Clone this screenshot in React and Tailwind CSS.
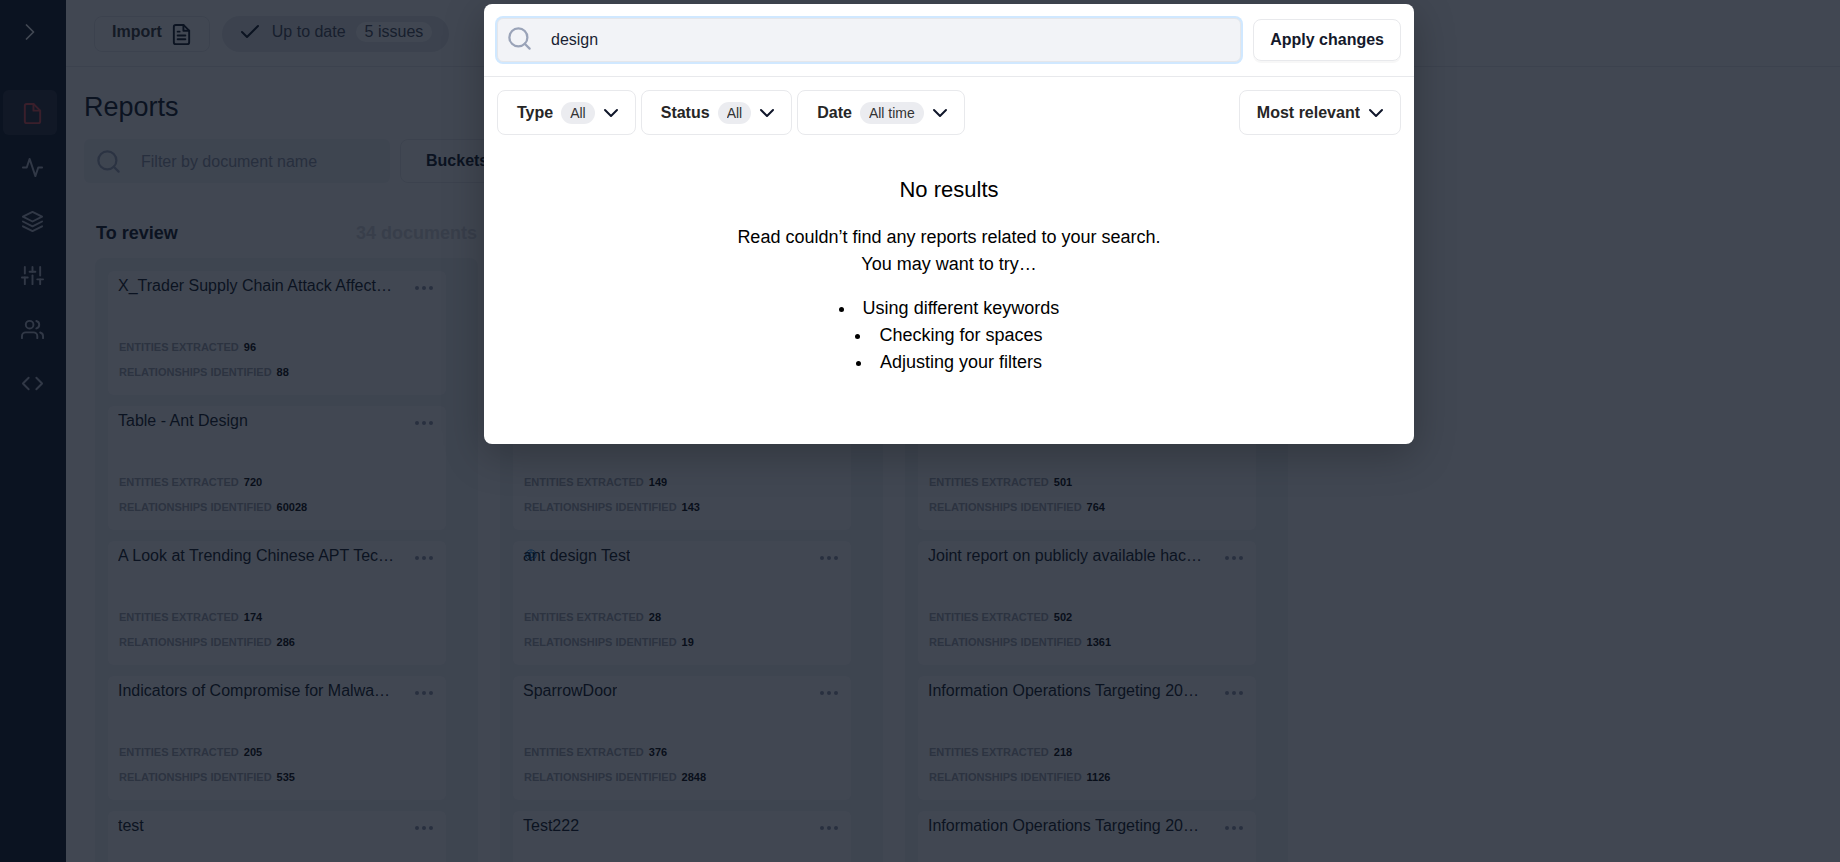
import React from 'react';
import { Check, ChevronDown, ChevronRight } from 'lucide-react';
import { FiActivity, FiCode, FiFile, FiFileText, FiLayers, FiSearch, FiSliders, FiUsers } from 'react-icons/fi';

const navItems = [
  { label: 'Reports', icon: FiFile, active: true },
  { label: 'Activity', icon: FiActivity },
  { label: 'Layers', icon: FiLayers },
  { label: 'Settings', icon: FiSliders },
  { label: 'Users', icon: FiUsers },
  { label: 'API', icon: FiCode },
];

const columns = [
  {
    title: 'To review',
    count: '34 documents',
    cards: [
      { title: 'X_Trader Supply Chain Attack Affect…', entities: 96, relationships: 88 },
      { title: 'Table - Ant Design', entities: 720, relationships: 60028 },
      { title: 'A Look at Trending Chinese APT Tec…', entities: 174, relationships: 286 },
      { title: 'Indicators of Compromise for Malwa…', entities: 205, relationships: 535 },
      { title: 'test' },
    ],
  },
  {
    cards: [
      {},
      { entities: 149, relationships: 143 },
      { title: 'ant design Test', entities: 28, relationships: 19, loading: true },
      { title: 'SparrowDoor', entities: 376, relationships: 2848 },
      { title: 'Test222' },
    ],
  },
  {
    cards: [
      {},
      { entities: 501, relationships: 764 },
      { title: 'Joint report on publicly available hac…', entities: 502, relationships: 1361 },
      { title: 'Information Operations Targeting 20…', entities: 218, relationships: 1126 },
      { title: 'Information Operations Targeting 20…' },
    ],
  },
];

const filters = [
  { id: 'type', label: 'Type', value: 'All' },
  { id: 'status', label: 'Status', value: 'All' },
  { id: 'date', label: 'Date', value: 'All time' },
];

function Sidebar() {
  return (
    <nav className="flex w-[66px] shrink-0 flex-col bg-[#0c1320]">
      <button aria-label="Expand menu" className="flex h-16 w-[60px] items-center justify-center">
        <ChevronRight size={28} strokeWidth={1.5} className="text-white" />
      </button>
      <div className="mt-[26px] flex flex-col gap-[9px] pl-[3px]">
        {navItems.map(({ label, icon: Icon, active }) => (
          <a
            key={label}
            href="#"
            aria-label={label}
            className={`flex h-[45px] w-[54px] items-center justify-center rounded-md pt-px pl-1 ${active ? 'bg-[#262c3a] text-[#e0484d]' : 'text-[#b4bac8]'}`}
          >
            <Icon size={23} />
          </a>
        ))}
      </div>
    </nav>
  );
}

function Spinner() {
  return (
    <svg viewBox="0 0 12 12" className="absolute top-2 left-3 size-3" fill="none" stroke="#1d8fe8">
      <circle cx="6" cy="6" r="5.2" strokeWidth="1" />
      <circle cx="6" cy="6" r="2.6" strokeWidth="1.4" />
      <path d="M6 .8v2.6M6 8.6v2.6M.8 6h2.6M8.6 6h2.6" strokeWidth=".8" />
    </svg>
  );
}

function Stat({ label, value }) {
  if (value === undefined) return null;
  return (
    <div className="flex gap-[5px] text-[11px] leading-[25px] font-bold">
      <span className="text-[#9ea3ae]">{label}</span>
      <span className="text-black">{value}</span>
    </div>
  );
}

function ReportCard({ card }) {
  return (
    <article className="relative h-[124px] rounded-md bg-white pr-3 pl-[10px]">
      {card.loading && <Spinner />}
      <div className="flex h-[30px] items-center justify-between">
        <h3 className="relative truncate text-base text-[#0c1320]">{card.title}</h3>
        <button aria-label="More" className="flex gap-[3px] pt-1 pr-px">
          <span className="size-1 rounded-full bg-[#8f96a8]" />
          <span className="size-1 rounded-full bg-[#8f96a8]" />
          <span className="size-1 rounded-full bg-[#8f96a8]" />
        </button>
      </div>
      <div className="mt-[34px] pl-px">
        <Stat label="ENTITIES EXTRACTED" value={card.entities} />
        <Stat label="RELATIONSHIPS IDENTIFIED" value={card.relationships} />
      </div>
    </article>
  );
}

function Board() {
  return (
    <div className="mt-9 flex gap-[22px] pl-[29px]">
      {columns.map((column, i) => (
        <section key={i} className="w-[383px] shrink-0">
          <div className="flex h-[39px] items-start justify-between pr-px pl-px text-lg leading-7 font-bold">
            <h2 className="text-[#0c1320]">{column.title}</h2>
            <span className="text-[#d5d7dc]">{column.count}</span>
          </div>
          <div className="flex flex-col gap-[11px] rounded-lg bg-[#f2f3f6] pt-[13px] pr-8 pb-4 pl-[13px]">
            {column.cards.map((card, j) => (
              <ReportCard key={j} card={card} />
            ))}
          </div>
        </section>
      ))}
    </div>
  );
}

function SearchModal() {
  return (
    <div className="absolute inset-0 flex items-start justify-center bg-[#0c1321]/78 pt-1 pl-[58px]">
      <div role="dialog" aria-label="Search" className="h-[440px] w-[930px] rounded-lg bg-white shadow-[0_10px_40px_rgba(0,0,0,0.25)]">
        <div className="flex h-[73px] items-center gap-3 border-b border-[#e8e9ec] px-[13px] py-3">
          <label className="relative flex-1">
            <FiSearch size={27} className="absolute top-[7px] left-[9px] text-[#9aa3b8]" />
            <input
              type="text"
              aria-label="Search reports"
              defaultValue="design"
              className="block h-11 w-full rounded-md border border-[#e4e6ea] bg-[#f2f3f7] pl-[53px] text-base text-[#1a1f33] ring-2 ring-[#d0e8ff] outline-none"
            />
          </label>
          <button className="h-[42px] rounded-lg border border-[#e8e9ec] px-4 text-base font-bold text-[#14192b] shadow-[0_2px_0_rgba(0,0,0,0.03)]">
            Apply changes
          </button>
        </div>

        <div className="flex gap-[5px] px-[13px] pt-[13px]">
          {filters.map((filter) => (
            <div key={filter.id} className="flex h-[45px] items-center rounded-lg border border-[#e8e9ec] pr-3 pl-[19px]">
              <label htmlFor={filter.id} className="mr-2 text-base font-bold text-[#262626]">{filter.label}</label>
              <select id={filter.id} className="mr-1 h-[22px] field-sizing-content appearance-none rounded-full bg-[#ebecf0] px-[9px] text-sm leading-[22px] text-[#333]">
                <option>{filter.value}</option>
              </select>
              <ChevronDown size={24} strokeWidth={2} className="text-[#10162a]" />
            </div>
          ))}
          <div className="relative ml-auto flex items-center">
            <select aria-label="Sort by" className="h-[45px] field-sizing-content appearance-none rounded-lg border border-[#e8e9ec] pr-10 pl-[17px] text-base font-bold text-[#262626]">
              <option>Most relevant</option>
            </select>
            <ChevronDown size={24} strokeWidth={2} className="pointer-events-none absolute right-[13px] text-[#10162a]" />
          </div>
        </div>

        <div className="mt-[41px] text-center text-lg leading-[27px] text-black">
          <h2 className="text-[22px] leading-[27px]">No results</h2>
          <p className="mt-[21px]">
            Read couldn’t find any reports related to your search.
            <br />
            You may want to try…
          </p>
          <ul className="mt-[17px] list-inside list-disc">
            <li>Using different keywords</li>
            <li>Checking for spaces</li>
            <li>Adjusting your filters</li>
          </ul>
        </div>
      </div>
    </div>
  );
}

export default function App() {
  return (
    <div className="relative flex h-screen overflow-hidden bg-white font-['Liberation_Sans',Arial,sans-serif]">
      <Sidebar />
      <main className="min-w-0 flex-1">
        <header className="flex h-[67px] items-start gap-3 border-b border-[#e8e9ec] pt-4 pl-7">
          <button className="flex h-9 items-center gap-2 rounded-lg border border-[#e8e9ec] pr-4 pb-1 pl-[17px] text-base font-bold text-[#333]">
            Import
            <FiFileText size={23} className="mt-1 text-[#0c1320]" />
          </button>
          <div className="flex h-9 items-center rounded-full bg-[#e6e8ec] pr-[17px] pb-1 pl-4 text-base text-[#454a57]">
            <Check size={24} className="text-[#0c1320]" />
            <span className="ml-[10px]">Up to date</span>
            <span className="ml-[10px] rounded-full bg-white px-[9px] leading-5">5 issues</span>
          </div>
        </header>

        <h1 className="mt-[22px] pl-[18px] text-[27px] leading-9 text-[#0c1320]">Reports</h1>
        <div className="mt-[14px] flex gap-[10px] pl-[18px]">
          <label className="relative">
            <FiSearch size={27} className="absolute top-[9px] left-[11px] text-[#9aa3b8]" />
            <input
              type="text"
              aria-label="Filter reports"
              placeholder="Filter by document name"
              className="h-11 w-[306px] rounded-md bg-[#f2f3f6] pt-px pl-[57px] text-base placeholder:text-[#8b92a3]"
            />
          </label>
          <button className="h-11 rounded-lg border border-[#e8e9ec] px-[25px] text-base font-bold text-[#0c1320]">Buckets</button>
        </div>
        <Board />
      </main>
      <SearchModal />
    </div>
  );
}
